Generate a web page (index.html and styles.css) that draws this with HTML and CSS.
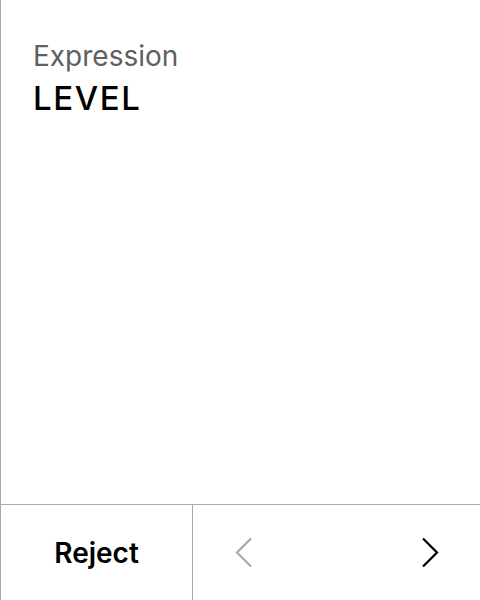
FILE: index.html
```html
<!DOCTYPE html>
<html>
<head>
<meta charset="utf-8">
<link rel="stylesheet" href="styles.css">
</head>
<body>
<div class="screen">
  <div class="content">
    <div class="label">Expression</div>
    <div class="value">LEVEL</div>
  </div>
  <div class="footer">
    <div class="reject">Reject</div>
    <div class="nav">
      <svg class="chev prev" width="18" height="31" viewBox="0 0 18 31"><polyline points="16,1.5 2,15.5 16,29.5" fill="none" stroke="#aaaaaa" stroke-width="2.2"/></svg>
      <svg class="chev next" width="18" height="31" viewBox="0 0 18 31"><polyline points="2,1.5 16,15.5 2,29.5" fill="none" stroke="#000000" stroke-width="2.2"/></svg>
    </div>
  </div>
</div>
</body>
</html>
```
FILE: styles.css
```css
html, body {
  margin: 0;
  padding: 0;
  background: #ffffff;
}
body {
  font-family: Inter, "Noto Sans", sans-serif;
}
.screen {
  width: 480px;
  height: 600px;
  box-sizing: border-box;
  border-left: 1px solid #aaaaaa;
  display: flex;
  flex-direction: column;
}
.content {
  flex: 1;
  padding: 40px 0 0 32px;
}
.label {
  font-size: 28px;
  color: #5f5f5f;
  line-height: 33px;
}
.value {
  font-size: 33px;
  font-weight: 500;
  letter-spacing: 1.6px;
  color: #000000;
  line-height: 40px;
  margin-top: 5px;
}
.footer {
  height: 95px;
  border-top: 1px solid #aaaaaa;
  display: flex;
}
.reject {
  width: 191px;
  border-right: 1px solid #aaaaaa;
  display: flex;
  align-items: center;
  justify-content: center;
  font-size: 28px;
  font-weight: 600;
  color: #000000;
}
.nav {
  flex: 1;
  display: flex;
  align-items: center;
  justify-content: space-between;
  padding: 0 41px 0 42px;
}
.chev {
  display: block;
}
```
